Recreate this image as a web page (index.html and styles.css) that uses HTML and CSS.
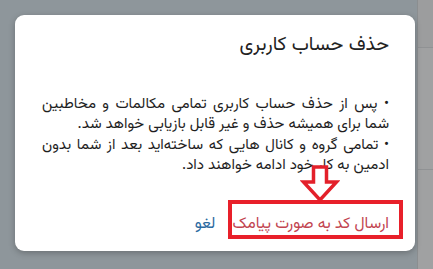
FILE: index.html
```html
<!DOCTYPE html>
<html lang="fa">
<head>
<meta charset="utf-8">
<title>حذف حساب کاربری</title>
<link rel="stylesheet" href="styles.css">
</head>
<body>
<div class="screen">
  <div class="backdrop">
    <div class="dialog" dir="rtl">
      <h1 class="title">حذف حساب کاربری</h1>
      <div class="body">
        <p>• پس از حذف حساب کاربری تمامی مکالمات و مخاطبین شما برای همیشه حذف و غیر قابل بازیابی خواهد شد.</p>
        <p>• تمامی گروه و کانال هایی که ساخته‌اید بعد از شما بدون ادمین به کار خود ادامه خواهند داد.</p>
      </div>
      <div class="actions">
        <button class="btn btn-danger">ارسال کد به صورت پیامک</button>
        <button class="btn btn-cancel">لغو</button>
      </div>
      <div class="mark-box"></div>
      <svg class="mark-arrow" width="40" height="38" viewBox="0 0 40 38">
        <path d="M13.5 2 H26.5 V17 H36.5 L20 35 L3.5 17 H13.5 Z" fill="#fff" stroke="#e3202a" stroke-width="3.5" stroke-linejoin="miter"/>
      </svg>
    </div>
  </div>
  <div class="side">
    <div class="side-band"></div>
    <div class="side-band2"></div>
  </div>
</div>
</body>
</html>
```
FILE: styles.css
```css
* { box-sizing: border-box; }
html, body { margin: 0; padding: 0; }
body {
  width: 433px;
  height: 269px;
  overflow: hidden;
  font-family: "Vazirmatn", "Noto Sans Arabic", "DejaVu Sans", sans-serif;
}
.screen {
  display: flex;
  width: 433px;
  height: 269px;
}
.backdrop {
  width: 417px;
  height: 269px;
  background: #8e969b;
  padding: 15px 2px 18px 15px;
}
.side {
  flex: 1;
  background: #a0a1a2;
  display: flex;
  flex-direction: column;
  border-left: 1px solid #8b8e90;
}
.side-band { height: 48px; background: #9c9d9e; border-bottom: 1px solid #909294; }
.side-band2 { height: 122px; border-bottom: 1px solid #909294; }
.dialog {
  position: relative;
  width: 400px;
  height: 236px;
  background: #fff;
  border-radius: 9px;
  box-shadow: 0 2px 6px rgba(0,0,0,0.25);
  padding: 15px 26px 17px 27px;
  display: flex;
  flex-direction: column;
}
.title {
  margin: 0;
  font-size: 19.5px;
  font-weight: normal;
  line-height: 30px;
  color: #222;
}
.body {
  margin-top: 35px;
  font-size: 15px;
  line-height: 20px;
  color: #1e1e1e;
  text-align: justify;
}
.body p { margin: 0 0 1px; }
.actions {
  margin-top: auto;
  display: flex;
  gap: 17px;
  align-items: center;
}
.btn {
  border: 0;
  background: none;
  padding: 0;
  font-family: inherit;
  font-size: 15.8px;
  line-height: 20px;
}
.btn-danger { color: #c24450; }
.btn-cancel { color: #2b6aa0; }
.mark-box {
  position: absolute;
  right: 12px;
  top: 185px;
  width: 175px;
  height: 39px;
  border: 4px solid #e8202a;
}
.mark-arrow {
  position: absolute;
  left: 285px;
  top: 150px;
}
```
